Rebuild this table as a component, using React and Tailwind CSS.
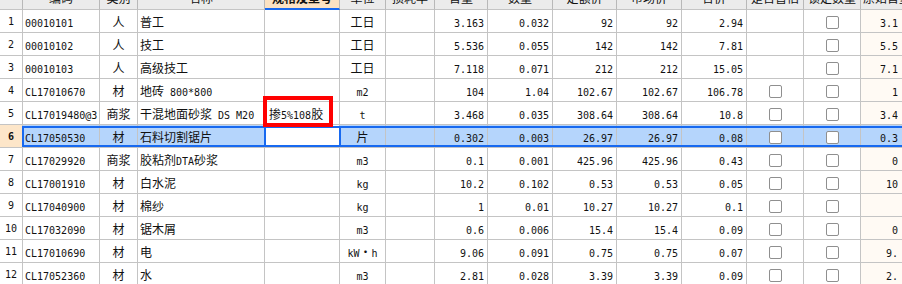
import React from 'react';

const GRID = 'grid grid-cols-[23px_77px_38px_127px_75px_46px_49px_53px_65px_64px_65px_65px_57px_57px_53px]';

const headers = ['', '编码', '类别', '名称', '规格及型号', '单位', '损耗率', '含量', '数量', '定额价', '市场价', '合价', '是否暂估', '锁定数量', '原始含量'];

// code, type, name, spec, unit, loss, content, qty, quota, market, total, estimate box?, original
const rows = [
  ['00010101', '人', '普工', '', '工日', '', '3.163', '0.032', '92', '92', '2.94', false, '3.163'],
  ['00010102', '人', '技工', '', '工日', '', '5.536', '0.055', '142', '142', '7.81', false, '5.536'],
  ['00010103', '人', '高级技工', '', '工日', '', '7.118', '0.071', '212', '212', '15.05', false, '7.118'],
  ['CL17010670', '材', '地砖 800*800', '', 'm2', '', '104', '1.04', '102.67', '102.67', '106.78', true, '104'],
  ['CL17019480@3', '商浆', '干混地面砂浆 DS M20', '掺5%108胶', 't', '', '3.468', '0.035', '308.64', '308.64', '10.8', true, '3.468'],
  ['CL17050530', '材', '石料切割锯片', '', '片', '', '0.302', '0.003', '26.97', '26.97', '0.08', true, '0.302'],
  ['CL17029920', '商浆', '胶粘剂DTA砂浆', '', 'm3', '', '0.1', '0.001', '425.96', '425.96', '0.43', true, '0.1'],
  ['CL17001910', '材', '白水泥', '', 'kg', '', '10.2', '0.102', '0.53', '0.53', '0.05', true, '10.2'],
  ['CL17040900', '材', '棉纱', '', 'kg', '', '1', '0.01', '10.27', '10.27', '0.1', true, '1'],
  ['CL17032090', '材', '锯木屑', '', 'm3', '', '0.6', '0.006', '15.4', '15.4', '0.09', true, '0.6'],
  ['CL17010690', '材', '电', '', 'kW·h', '', '9.06', '0.091', '0.75', '0.75', '0.07', true, '9.06'],
  ['CL17052360', '材', '水', '', 'm3', '', '2.81', '0.028', '3.39', '3.39', '0.09', true, '2.81'],
];

// SimSun-like mix: CJK at 12px, latin half-width at 10px mono
function Txt({ s }) {
  const parts = s.split(/([\u3000-\u9fff\uff00-\uffef·]+)/).filter(Boolean);
  return (
    <span className="whitespace-pre">
      {parts.map((p, i) =>
        /[\u3000-\u9fff\uff00-\uffef·]/.test(p) ? (
          <span key={i} className="font-['Noto_Sans_CJK_SC',sans-serif] text-[12px]">{p}</span>
        ) : (
          <span key={i} className="font-['DejaVu_Sans_Mono',monospace] text-[10px]">{p}</span>
        )
      )}
    </span>
  );
}

function Box() {
  return <span className="block w-[13px] h-[13px] mt-[2px] bg-white border border-[#8f8f8f] rounded-[2px]" />;
}

const cell = 'h-[22px] flex items-center border-r border-[#c4c4c4] overflow-hidden';

function Row({ r, i }) {
  const sel = i === 5;
  const bg = sel ? 'bg-[#b5d5fc]' : 'bg-white';
  const [code, type, name, spec, unit, loss, content, qty, quota, market, total, est, orig] = r;
  return (
    <div className={`${GRID} relative border-b border-[#c4c4c4] text-[#111]`}>
      <div className={`${cell} justify-center ${sel ? 'bg-[#fde6c9] font-bold' : 'bg-white'}`}>
        <span className="font-['DejaVu_Sans_Mono',monospace] text-[10px]">{i + 1}</span>
      </div>
      <div className={`${cell} pl-[2px] ${bg}`}><Txt s={code} /></div>
      <div className={`${cell} justify-center ${bg}`}><Txt s={type} /></div>
      <div className={`${cell} pl-[2px] ${bg}`}><Txt s={name} /></div>
      <div className={`${cell} pl-[4px] bg-white`}><Txt s={spec} /></div>
      <div className={`${cell} justify-center ${bg}`}><Txt s={unit} /></div>
      <div className={`${cell} justify-end pr-[3px] ${bg}`}><Txt s={loss} /></div>
      <div className={`${cell} justify-end pr-[3px] ${bg}`}><Txt s={content} /></div>
      <div className={`${cell} justify-end pr-[3px] ${bg}`}><Txt s={qty} /></div>
      <div className={`${cell} justify-end pr-[3px] ${bg}`}><Txt s={quota} /></div>
      <div className={`${cell} justify-end pr-[3px] ${bg}`}><Txt s={market} /></div>
      <div className={`${cell} justify-end pr-[3px] ${bg}`}><Txt s={total} /></div>
      <div className={`${cell} justify-center ${bg}`}>{est && <Box />}</div>
      <div className={`${cell} justify-center ${bg}`}><Box /></div>
      <div className={`${cell} ${sel ? 'bg-[#b5d5fc]' : 'bg-[#fffaf4]'}`}>
        <div className="w-[37px] overflow-hidden">
          <div className="w-[49px] flex justify-end"><Txt s={orig} /></div>
        </div>
      </div>
      {sel && (
        <>
          <div className="absolute left-[22px] top-[1px] bottom-0 right-[-10px] border-2 border-[#1769f0] pointer-events-none" />
          <div className="absolute left-[264px] top-[1px] bottom-0 w-[77px] border-x-2 border-[#1769f0] pointer-events-none" />
        </>
      )}
    </div>
  );
}

export default function App() {
  return (
    <div className="relative w-[902px] h-[284px] overflow-hidden bg-white">
      <div className="w-[914px]">
        {/* header, mostly scrolled off the top */}
        <div className={GRID}>
          {headers.map((h, i) => (
            <div
              key={i}
              className={`h-[10px] overflow-hidden border-r border-[#b8b8b8] ${
                i === 4 ? 'bg-[#fbe2c3] border-b-2 border-b-[#1769f0] font-bold' : 'bg-[#ebebeb] border-b border-b-[#c4c4c4]'
              }`}
            >
              <div className="h-[22px] -mt-[13px] flex items-center justify-center text-[#111]">
                <span className="font-['Noto_Sans_CJK_SC',sans-serif] text-[12px] whitespace-nowrap">{h}</span>
              </div>
            </div>
          ))}
        </div>
        {rows.map((r, i) => (
          <Row key={i} r={r} i={i} />
        ))}
      </div>
      {/* red annotation box */}
      <div className="absolute left-[263px] top-[96px] w-[70px] h-[31px] border-[4px] border-[#ff0000] pointer-events-none" />
    </div>
  );
}
